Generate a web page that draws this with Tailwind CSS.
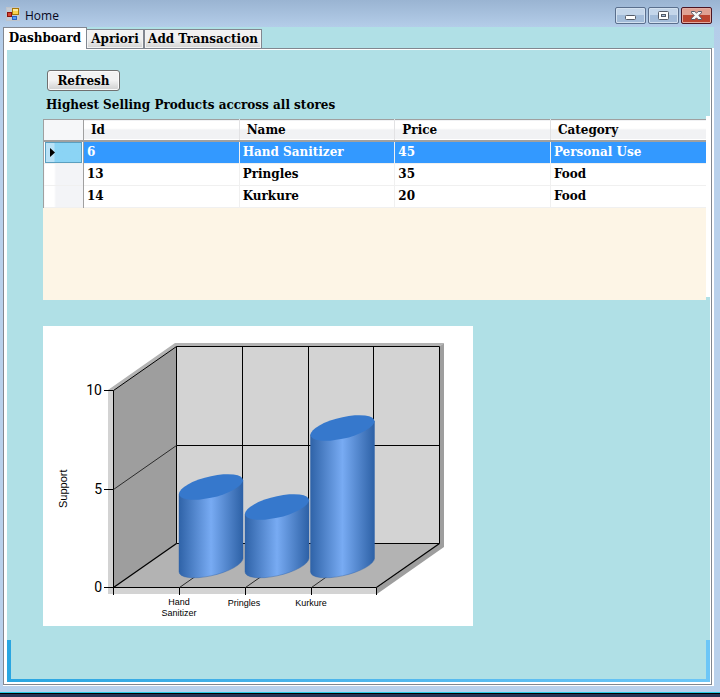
<!DOCTYPE html>
<html lang="en">
<head>
<meta charset="utf-8">
<meta name="viewport" content="width=device-width, initial-scale=1">
<title>Home</title>
<script src="https://cdn.jsdelivr.net/npm/@tailwindcss/browser@4"></script>
</head>
<body class="flex min-h-screen flex-col bg-[#b9d1ec] font-['DejaVu_Serif',serif] text-[12px] leading-4 font-bold text-black">
<div class="flex grow flex-col bg-linear-to-b from-[#9ab4d2] from-0% via-[#b4cde9] via-[27px] to-[#b9d1ec] to-[120px] pb-1.5">
  <header class="flex h-[27px] items-center pr-2 pl-1.5">
    <svg class="h-[14px] w-[14px]" viewBox="0 0 14 14" aria-hidden="true">
      <rect x=".5" y=".5" width="13" height="13" fill="#c5cbd3" stroke="#bfc4cb"/>
      <rect x="1.5" y="5.5" width="4" height="4" fill="#d6432f" stroke="#8b1210"/>
      <rect x="6.5" y="1.5" width="6" height="6" fill="#fbd34d" stroke="#a87908"/>
      <path d="M7 2h5v2H7z" fill="#ffe99c"/>
      <rect x="6.5" y="9.500" width="4" height="3" fill="#5c9bf0" stroke="#2862c2"/>
    </svg>
    <h1 class="grow pt-1 pl-[5px] font-['Open_Sans',sans-serif] text-[12px] font-normal text-[#06061c]">Home</h1>
    <div class="flex gap-0.5 pt-1">
      <button aria-label="Minimize" class="flex h-[17px] w-[31px] items-center justify-center rounded-[2px] border border-[#5a6f8d] bg-linear-to-b from-[#c4d6ea] from-50% to-[#a3bcd9] to-50% shadow-[inset_0_0_0_1px_#d3e1f0]">
        <svg class="h-[11px] w-[11px]" viewBox="0 0 11 11"><rect x=".5" y="5.500" width="10" height="4" rx="1" fill="#fff" stroke="#545b67"/></svg>
      </button>
      <button aria-label="Maximize" class="flex h-[17px] w-[31px] items-center justify-center rounded-[2px] border border-[#5a6f8d] bg-linear-to-b from-[#c4d6ea] from-50% to-[#a3bcd9] to-50% shadow-[inset_0_0_0_1px_#d3e1f0]">
        <svg class="h-[9px] w-[11px]" viewBox="0 0 11 9"><rect x=".5" y=".5" width="10" height="8" rx="1" fill="#fff" stroke="#545b67"/><rect x="3.500" y="3.500" width="4" height="2" fill="#a9c0dc" stroke="#545b67"/></svg>
      </button>
      <button aria-label="Close" class="flex h-[17px] w-[31px] items-center justify-center rounded-[2px] border border-[#4c1522] bg-linear-to-b from-[#e0a193] from-50% to-[#bb4530] to-50% shadow-[inset_0_0_0_1px_#e3aba0]">
        <svg class="h-[9px] w-[11px]" viewBox="0 0 11 9"><path d="M.5.5h3.300L5.500 2.200 7.200.5h3.300v1.300L7.800 4.500l2.700 2.700v1.300H7.200L5.500 6.800 3.800 8.500H.5V7.200l2.700-2.700L.5 1.800z" fill="#f7f7f7" stroke="#565867"/></svg>
      </button>
    </div>
  </header>

  <div class="mr-1.5 ml-[3px] flex grow flex-col bg-[#b0e0e6]">
    <nav class="flex h-[21px] items-end" role="tablist">
      <button role="tab" aria-selected="true" class="relative z-10 -mb-px h-[22px] w-[84px] border border-b-0 border-[#828790] bg-white pb-0.5">Dashboard</button>
      <button role="tab" aria-selected="false" class="-ml-px h-[19px] w-[58px] border border-b-0 border-[#828790] bg-linear-to-b from-[#f2f2f2] from-50% to-[#d2d2d2] whitespace-nowrap shadow-[inset_0_0_0_1px_#f4f4f4]">Apriori</button>
      <button role="tab" aria-selected="false" class="h-[19px] w-[118px] border border-b-0 border-[#828790] bg-linear-to-b from-[#f2f2f2] from-50% to-[#d2d2d2] whitespace-nowrap shadow-[inset_0_0_0_1px_#f4f4f4]">Add Transaction</button>
    </nav>
    <div class="flex grow flex-col border-r-2 border-b border-white">
      <main role="tabpanel" aria-label="Dashboard" class="flex grow flex-col border border-[#828790]">
        <div class="flex grow flex-col border-t border-r border-b-2 border-l-[3px] border-white bg-[#b0e0e6]">
          <div class="pt-5 pl-10">
            <button class="h-[21px] w-[73px] rounded-[3px] border border-[#707070] bg-linear-to-b from-[#f2f2f2] from-50% to-[#cfcfcf] shadow-[inset_0_0_0_1px_#fafafa]">Refresh</button>
          </div>
          <h2 class="mt-1.5 pl-[39px]">Highest Selling Products accross all stores</h2>

          <div class="mt-[3px] flex h-[184px] pl-9">
            <div class="mt-[3px] min-w-0 grow overflow-hidden bg-[#fdf5e6]">
              <table class="w-full table-fixed border-collapse text-left">
                <colgroup><col class="w-10"><col><col><col><col></colgroup>
                <thead>
                  <tr class="h-[21px] border-t border-b-2 border-[#a0a0a0] bg-linear-to-b from-white from-40% to-[#f1f2f4] to-50%">
                    <th class="border-r border-l border-[#a0a0a0] bg-[#f6f7f9]" aria-label="Row"></th>
                    <th class="border-r border-[#e2e2e4] p-0 pl-[7px]" scope="col">Id</th>
                    <th class="border-r border-[#e2e2e4] p-0 pl-[7px]" scope="col">Name</th>
                    <th class="border-r border-[#e2e2e4] p-0 pl-[7px]" scope="col">Price</th>
                    <th class="p-0 pl-[7px]" scope="col">Category</th>
                  </tr>
                </thead>
                <tbody class="bg-white">
                  <tr class="h-[22px] border-b border-[#f0f0f0] bg-[#3399ff] text-white">
                    <td class="border-r border-l border-[#a0a0a0] bg-white p-0 pr-px pl-px"><div class="flex h-[21px] items-center border border-[#5a9fc0] bg-linear-to-r from-[#b9e2f7] from-[8px] to-[#8bd4f5] to-[9px] pl-1"><svg class="h-[9px] w-[5px]" viewBox="0 0 5 9" aria-label="Current row"><path d="M0 0L5 4.500 0 9z"/></svg></div></td>
                    <td class="border-r border-[#f0f0f0] p-0 pl-[3px]">6</td>
                    <td class="border-r border-[#f0f0f0] p-0 pl-[3px]">Hand Sanitizer</td>
                    <td class="border-r border-[#f0f0f0] p-0 pl-[3px]">45</td>
                    <td class="p-0 pl-[3px]">Personal Use</td>
                  </tr>
                  <tr class="h-[22px] border-b border-[#f0f0f0]">
                    <td class="border-r border-l border-[#a0a0a0] bg-linear-to-r from-white from-[10px] to-[#f3f4f7] to-[11px]"></td>
                    <td class="border-r border-[#f0f0f0] p-0 pl-[3px]">13</td>
                    <td class="border-r border-[#f0f0f0] p-0 pl-[3px]">Pringles</td>
                    <td class="border-r border-[#f0f0f0] p-0 pl-[3px]">35</td>
                    <td class="p-0 pl-[3px]">Food</td>
                  </tr>
                  <tr class="h-[22px] border-b border-[#f0f0f0]">
                    <td class="border-r border-l border-[#a0a0a0] bg-linear-to-r from-white from-[10px] to-[#f3f4f7] to-[11px]"></td>
                    <td class="border-r border-[#f0f0f0] p-0 pl-[3px]">14</td>
                    <td class="border-r border-[#f0f0f0] p-0 pl-[3px]">Kurkure</td>
                    <td class="border-r border-[#f0f0f0] p-0 pl-[3px]">20</td>
                    <td class="p-0 pl-[3px]">Food</td>
                  </tr>
                </tbody>
              </table>
            </div>
            <div class="h-[181px] w-1 shrink-0 bg-white"></div>
          </div>

          <figure class="mt-[26px] ml-9 w-[430px] bg-white">
            <svg class="block h-[300px] w-full font-['Liberation_Sans',Arial,sans-serif] font-normal" viewBox="0 0 430 300" role="img" aria-label="Support by product">
              <defs>
                <linearGradient id="side" x1="0" x2="1" y1="0" y2="0">
                  <stop offset="0" stop-color="#2f63a8"/><stop offset=".5" stop-color="#78abf3"/><stop offset="1" stop-color="#2d61a6"/>
                </linearGradient>
              </defs>
              <!-- outer walls -->
              <path d="M65 64L132 17H401L396 21H134L70 65z" fill="#b3b3b3"/>
              <path d="M65 63.500L70 65V262H334V268H65z" fill="#d3d3d3"/>
              <path d="M396 21L401 17V221L334 268V262L396 218z" fill="#9e9e9e"/>
              <!-- inner faces -->
              <path d="M70.500 64.500L133.500 20.500V217.500L70.500 261.500z" fill="#9e9e9e"/>
              <path d="M133.500 20.500H396.500V217.500H133.500z" fill="#d3d3d3"/>
              <path d="M133.500 217.500H396.500L333.500 261.500H70.500z" fill="#b3b3b3"/>
              <g fill="none" stroke="#000">
                <path d="M133.500 20.500H396.500V217.500H133.500zM133.500 119.500H396.500M199.500 20.500V217.500M265.500 20.500V217.500M330.500 20.500V217.500"/>
                <path d="M133.500 20.500L70.500 64.500V269M61 64.500H70.500M61 163.500H70.500M61 261.500H333.500M136.500 261.500V269M202.500 261.500V269M268.500 261.500V269M333.500 261.500V269"/>
                <path d="M70.500 261.500L133.500 217.500M333.500 261.500L396.500 217.500" stroke-width="1.300"/>
                <path d="M70.500 163.500L133.500 119.500M136.500 261.500L199.500 217.500M202.500 261.500L265.500 217.500M268.500 261.500L330.500 217.500" stroke="#2b2b2b"/>
              </g>
              <!-- cylinders -->
              <g stroke="#2d62ab" stroke-width=".4">
                <g transform="matrix(1 -.2125 0 1 168 161)"><path d="M-32 0V78A32 10.850 0 0 0 32 78V0z" fill="url(#side)"/><ellipse rx="32" ry="10.850" fill="#3678cc" stroke="none"/></g>
                <g transform="matrix(1 -.2125 0 1 234 181)"><path d="M-32 0V58A32 10.850 0 0 0 32 58V0z" fill="url(#side)"/><ellipse rx="32" ry="10.850" fill="#3678cc" stroke="none"/></g>
                <g transform="matrix(1 -.2125 0 1 299.500 102)"><path d="M-32 0V137A32 10.850 0 0 0 32 137V0z" fill="url(#side)"/><ellipse rx="32" ry="10.850" fill="#3678cc" stroke="none"/></g>
              </g>
              <g class="font-['Roboto',sans-serif]" font-size="14" text-anchor="end"><text x="59" y="69">10</text><text x="59" y="168">5</text><text x="59" y="266">0</text></g>
              <g font-size="9" text-anchor="middle"><text x="136" y="279">Hand</text><text x="136" y="290">Sanitizer</text><text x="201" y="280">Pringles</text><text x="268" y="280">Kurkure</text></g>
              <text transform="translate(24 182) rotate(-90)" font-size="11">Support</text>
            </svg>
          </figure>

          <div class="mt-auto pt-3">
            <div class="flex h-[39px] justify-between"><div class="w-1 bg-[#29a6e1]"></div><div class="w-1 bg-[#6cc6f7]"></div></div>
            <div class="h-[3px] bg-linear-to-r from-[#29a6e1] to-[#6cc6f7]"></div>
          </div>
        </div>
      </main>
    </div>
  </div>
</div>
<footer>
  <div class="h-px bg-[#26cbe4]"></div>
  <div class="h-px bg-black"></div>
  <div class="h-[3px] bg-[#253253]"></div>
</footer>
</body>
</html>
